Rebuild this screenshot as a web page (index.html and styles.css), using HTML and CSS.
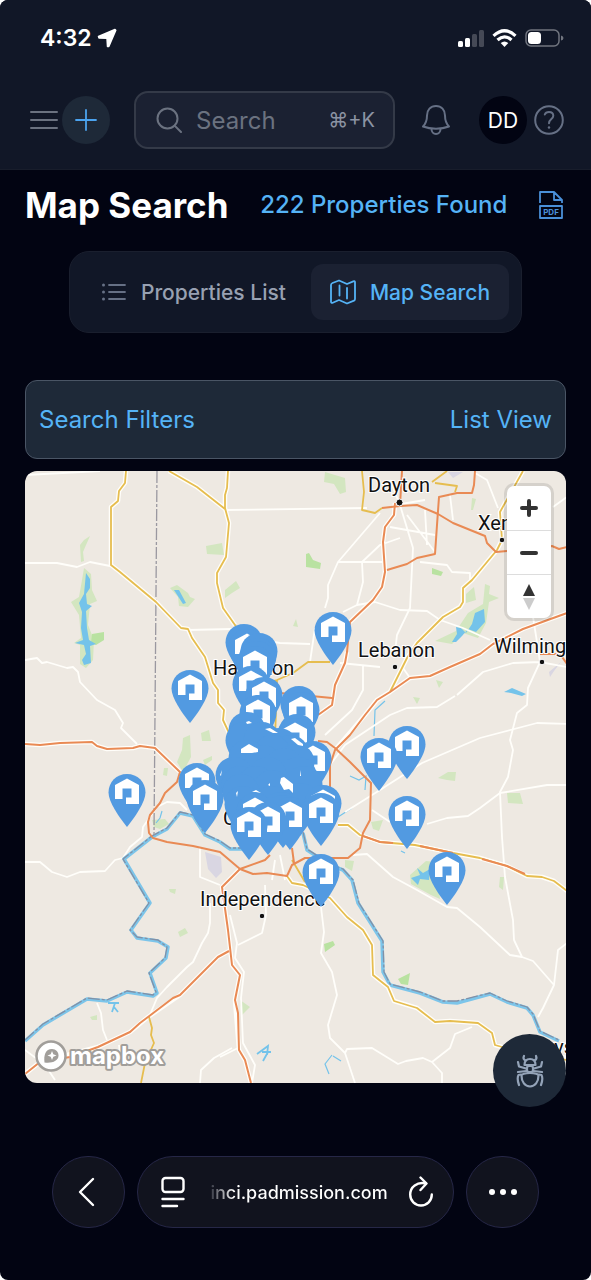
FILE: index.html
```html
<!DOCTYPE html>
<html lang="en">
<head>
    <meta charset="UTF-8">
    <meta name="viewport" content="width=device-width, initial-scale=1.0">
    <title>Map Search</title>
    <link rel="stylesheet" href="styles.css">
</head>
<body>

<div class="screen">
    <header class="top">
        <div class="status-bar">
            <span class="clock">4:32</span>
            <svg class="location-icon" width="20" height="20" viewBox="0 0 20 20"><path d="M18 1.500L1.500 8.500L2 10L10 10.300L10.500 18.500H11.800L18.800 2.200Z" fill="#fff" stroke="#fff" stroke-width="1.500" stroke-linejoin="round"/></svg>
            <svg class="status-icons" width="106" height="20" viewBox="0 0 106 20">
                <g fill="#fff">
                    <rect x="0" y="13" width="5" height="6" rx="1.500"/>
                    <rect x="7" y="10" width="5" height="9" rx="1.500"/>
                    <rect x="14" y="6" width="5" height="13" rx="1.500" opacity=".22"/>
                    <rect x="21" y="2" width="5" height="17" rx="1.500" opacity=".22"/>
                </g>
                <g fill="none" stroke="#fff" stroke-width="3.200">
                    <path d="M35.500 7.800 Q46.500 -2.400 57.500 7.800"/>
                    <path d="M39.500 12 Q46.500 5.600 53.500 12"/>
                </g>
                <path d="M42.700 15 Q46.500 11.800 50.300 15 L46.500 19Z" fill="#fff"/>
                <rect x="68" y="2" width="33" height="16" rx="5" fill="none" stroke="#71757f" stroke-width="1.500"/>
                <rect x="70" y="4" width="13" height="12" rx="3.500" fill="#fff"/>
                <path d="M103 7.500 Q105.500 8 105.500 10 Q105.500 12 103 12.500Z" fill="#71757f"/>
            </svg>
        </div>

        <nav class="toolbar">
            <button class="menu-btn" aria-label="Menu">
                <svg width="28" height="20" viewBox="0 0 28 20" fill="none" stroke="#6b7280" stroke-width="2" stroke-linecap="round"><path d="M1 2H27M1 10H27M1 18H27"/></svg>
            </button>
            <button class="add-btn" aria-label="Add">
                <svg width="22" height="22" viewBox="0 0 22 22" fill="none" stroke="#4ba3ef" stroke-width="1.800" stroke-linecap="round"><path d="M11 1V21M1 11H21"/></svg>
            </button>
            <label class="search-box">
                <svg width="26" height="26" viewBox="0 0 26 26" fill="none" stroke="#6b7280" stroke-width="2" stroke-linecap="round"><circle cx="11.500" cy="11.500" r="10"/><path d="M18.600 18.600L25 25"/></svg>
                <input type="search" placeholder="Search" aria-label="Search">
                <span class="shortcut">⌘+K</span>
            </label>
            <button class="bell-btn" aria-label="Notifications">
                <svg width="28" height="32" viewBox="0 0 28 32" fill="none" stroke="#667085" stroke-width="2" stroke-linejoin="round"><path d="M14 2C8.500 2 5 6 5 11.500C5 17.500 3.500 20 1 22.500C5 24 9 24.700 14 24.700C19 24.700 23 24 27 22.500C24.500 20 23 17.500 23 11.500C23 6 19.500 2 14 2Z"/><path d="M9.500 25C9.500 28 11.500 30 14 30C16.500 30 18.500 28 18.500 25"/></svg>
            </button>
            <button class="avatar">DD</button>
            <button class="help-btn" aria-label="Help">
                <svg width="30" height="30" viewBox="0 0 30 30" fill="none" stroke="#667085" stroke-width="2" stroke-linecap="round"><circle cx="15" cy="15" r="13.800"/><path d="M10.800 9.500C11.500 7.500 13 6.900 15 6.900C17.800 6.900 19.300 8.500 19.300 10.700C19.300 14 15 14 15 18.200"/><path d="M15 22.500V22.600" stroke-width="2.400"/></svg>
            </button>
        </nav>
    </header>

    <main>
        <div class="title-row">
            <h1>Map Search</h1>
            <span class="count">222 Properties Found</span>
            <button class="pdf-btn" aria-label="Export PDF">
                <svg width="24" height="28" viewBox="0 0 24 28" fill="none" stroke="#4a90d9" stroke-width="1.800" stroke-linejoin="round">
                    <path d="M1 12V1H15L23 9V12M15 1V9H23"/>
                    <rect x="1" y="15" width="22" height="12"/>
                    <text x="12" y="24" text-anchor="middle" class="pdf-text">PDF</text>
                </svg>
            </button>
        </div>

        <div class="tabs">
            <a class="tab" href="#list">
                <svg width="26" height="20" viewBox="0 0 26 20" fill="none" stroke="#667085" stroke-width="1.800" stroke-linecap="round"><path d="M8 3H24M8 10H24M8 17H24"/><path d="M2.500 3V3.010M2.500 10V10.010M2.500 17V17.010" stroke-width="3"/></svg>
                Properties List
            </a>
            <a class="tab active" href="#map">
                <svg width="26" height="26" viewBox="0 0 26 26" fill="none" stroke="#55b3f6" stroke-width="1.800" stroke-linecap="round" stroke-linejoin="round"><path d="M9 1.500L2.500 4Q1 4.600 1 6V22.500Q1 24.500 2.800 23.700L9 21L17 24.500L24 21.700Q25 21.200 25 20V3.500Q25 1.700 23.300 2.300L17 5Z"/><path d="M9.500 6.500V16.500M17 9V19.500"/></svg>
                Map Search
            </a>
        </div>

        <div class="filter-bar">
            <a href="#filters">Search Filters</a>
            <a href="#list">List View</a>
        </div>

        <div class="map-wrap">
            <svg class="map" viewBox="25 471 541 612" preserveAspectRatio="xMidYMid slice">
                <defs>
                    <path id="drop" d="M0 0C-10.500 0 -18.500 8 -18.500 18.500C-18.500 28 -8 43 0 53C8 43 18.500 28 18.500 18.500C18.500 8 10.500 0 0 0Z" fill="#529ae1"/>
                    <path id="house" d="M0 4.500L12 11V30H-1V23.500H4.500V14.500H-4.500V25H-12V11Z" fill="#fff"/>
                    <g id="pin"><use href="#drop"/><use href="#house"/></g>
                </defs>
                <rect x="25" y="471" width="542" height="612" fill="#eee9e2"/>

                <!-- parks -->
                <g fill="#d3e6c0">
                    <path d="M80 545L84 540L90 536L86 545L83 552L84 561L81 562Z"/>
                    <path d="M84 568L91 574L92 590L97 601L90 604L88 625L94 640L93 660L86 668L80 664L80 645L74 643L81 638L79 615L71 602L79 597L82 580Z"/>
                    <path d="M170 588L177 585L188 593L190 597L195 599L188 607L179 606L178 597Z"/>
                    <path d="M206 546L222 543L224 555L207 554Z"/>
                    <path d="M325 472L345 478L346 492L340 494L334 484L324 482Z"/>
                    <path d="M225 590L236 581L240 588L232 593L225 598Z"/>
                    <path d="M183 738L190 735L191 757L183 772L177 762L182 750ZM201 733L209 730L211 741L202 741Z"/>
                    <path d="M203 760L212 756L212 760L205 765ZM164 768L168 768L167 776L163 775Z"/>
                    <path d="M152 820L165 819L169 824L160 829L154 827Z"/>
                    <path d="M466 594L474 587L476 600L466 603ZM485 584L490 586L489 594L499 598L489 602L486 623L478 638L463 633L452 644L435 641L456 631L468 613L483 604Z"/>
                    <path d="M438 778L448 772L456 772L455 781L447 780ZM507 793L520 793L523 804L508 803Z"/>
                    <path d="M371 822L383 820L379 831L373 829ZM410 875L426 861L436 862L440 899L431 895L411 884Z"/>
                    <path d="M169 889L176 889L175 894L170 892ZM178 932L185 928L188 933L180 937ZM90 1017L97 1015L97 1020L92 1020Z"/>
                    <path d="M240 1000L250 1007L242 1015ZM472 498L476 499L473 510L471 510ZM345 860L354 861L352 871L345 867Z"/>
                    <path d="M413 697L420 698L417 704ZM436 680L443 682L439 688ZM293 626L296 619L298 627ZM500 877L504 877L503 890L499 887Z"/>
                </g>
                <g fill="#b9e2a1">
                    <path d="M92 634L104 632L104 640L96 645L91 643ZM306 554L309 553L313 560L321 563L320 569L306 567Z"/>
                    <path d="M324 944L333 941L335 945L325 952ZM398 979L410 973L408 985L401 984ZM432 568L443 572L441 576L432 574Z"/>
                </g>
                <g fill="#d9d6e2">
                    <path d="M205 852L221 857L222 872L216 878L208 869ZM448 472H463L453 478ZM549 672L561 662L554 671L550 677Z"/>
                </g>

                <!-- lakes -->
                <g fill="#74c3ea">
                    <path d="M86 573L90 579L90 588L86 594L87 604L92 606L86 611L87 628L89 640L96 644L90 646L91 663L84 665L82 660L86 654L84 645L75 643L83 640L81 628L82 612L79 603L84 594Z"/>
                    <path d="M174 590L179 590L186 603L183 604Z"/>
                    <path d="M484 609L485 622L476 632L468 629L462 636L456 642L452 642L457 634L456 627L461 628L466 633L472 624L475 613Z"/>
                    <path d="M504 692L512 688L526 694L522 696L511 693Z"/>
                    <path d="M411 878L420 875L417 868L423 873L430 869L429 880L420 879L418 885Z"/>
                </g>
                <g fill="none" stroke="#74c3ea" stroke-width="1.200">
                    <path d="M162 811L160 818L156 823M332 1055L325 1064L329 1074M333 1056L341 1061"/>
                    <path d="M385 701L375 710L374 736M350 776L359 780L366 776L365 790M338 817L352 808M401 851L405 853"/>
                    <path d="M108 1003L119 1003M115 1003L112 1012M114 1007L118 1012M257 1054L268 1046L267 1055M262 1052L271 1052M268 1052L263 1061" stroke-width="1.800"/>
                </g>

                <!-- minor roads -->
                <g fill="none" stroke="#fffefa" stroke-width="1.800" stroke-linejoin="round">
                    <path d="M25 475L100 471M225 510L367 508M25 563L57 563L77 567L90 562L110 566"/>
                    <path d="M25 660L37 658L42 663L47 662L67 668L73 667L78 672L80 682L97 700L115 710L123 723L121 728L137 744"/>
                    <path d="M188 630L232 629M262 640L280 643L310 644M315 628L310 662"/>
                    <path d="M25 862H40L52 872L67 877L80 872L105 871L115 860L123 858L130 847L142 837L143 827L157 807L167 802L180 803L187 810"/>
                    <path d="M149 1017L157 998L167 987L187 967L193 962L202 943L208 933L210 923V903M97 1003L101 1013L103 1030L107 1040M200 847V877L220 885"/>
                    <path d="M321 907L324 932L321 953L332 972L337 995L328 1025L330 1038L345 1053L355 1083M345 1053L347 1049L372 1048L398 1064L406 1061L423 1058L432 1062L450 1048L455 1034L472 1027M432 1062L442 1073V1083"/>
                    <path d="M265 885L266 915L262 933L238 945M230 915L237 943L235 958L244 972L241 998L243 1043L255 1065L252 1083M220 1057L240 1047M200 1083L201 1070L214 1058L232 1048"/>
                    <path d="M353 855L367 854L393 877L417 890L447 907L457 908L480 927L510 955L522 957L533 961L554 985L543 1008L538 1017M554 985L558 950L567 943"/>
                    <path d="M540 662L528 688L527 705L517 713L510 740L513 750L508 777L500 792L502 837L505 877L513 920L514 940L522 957"/>
                    <path d="M567 785H547L500 793L480 808L468 816L447 818L427 824M567 724L537 723L480 738L422 763L380 790L345 812M455 696L437 707L407 708L390 715L345 745L330 765M372 810L390 822"/>
                    <path d="M380 513L338 562L328 585V598L325 608M338 562H383M400 538L380 545L362 562L363 582L357 605L343 612M357 605L375 602L400 610L427 611L440 620L463 628L490 640"/>
                    <path d="M400 505L413 548L410 608L397 635L395 652M420 562L447 565L452 572L470 573V580M407 515L435 552M390 527L435 535M425 510L427 545M400 505L390 480M450 495L453 520M395 505L425 500"/>
                    <path d="M540 662L513 663L483 672L457 695M533 617L537 642L540 662M475 473L487 480L498 508M567 497L553 507M340 663L380 667M363 665V690L352 710L325 735M540 662L567 667M403 668L410 678"/>
                    <path d="M25 1050L45 1065L55 1080M119 1045L121 1060M280 855L285 880M275 860L272 880"/>
                </g>

                <!-- river -->
                <g fill="none" stroke-linejoin="round">
                    <g stroke="#7cc5ea" stroke-width="3.500">
                        <path d="M25 1041L43 1025L87 999L107 1001L127 992L153 996L157 993L150 973L166 958L168 947L158 941L137 938L131 930L150 903L124 859L152 837L167 829L180 813L193 816L205 835L220 842L230 849H245"/>
                        <path d="M303 833L307 850L330 865L343 870L352 880L358 903L382 941L383 972L390 985L420 993L443 1002L457 1003L490 994L507 1002L527 1008L533 1015L540 1032L559 1041"/>
                    </g>
                    <g stroke="#8290a6" stroke-width="1.300" stroke-dasharray="12 2 3 2">
                        <path d="M25 1040L43 1024L87 998L107 1000L127 991L153 995L156 992L149 973L165 958L167 947L158 940L137 937L130 930L149 903L123 859L152 836L167 828L180 812L193 815L205 834L220 841L230 848H245"/>
                        <path d="M303 832L307 849L330 864L343 869L353 880L359 903L383 941L384 972L390 984L420 992L443 1001L457 1001L490 993L507 1001L527 1007L533 1014L540 1031L559 1040"/>
                        <path d="M157 471L154 835" stroke="#9a98a0"/>
                    </g>
                </g>

                <!-- highways: white casing first, colour on top -->
                <g fill="none" stroke="#fffefa" stroke-width="4.500" stroke-linejoin="round">
                    <path d="M126 471L125 483L119 491L118 501L111 507V565L120 572L156 602L181 628L188 629L192 638L205 657L213 683L218 690V703L224 710L223 720L230 735"/>
                    <path d="M228 471L227 488L225 495V508L229 523L226 557L217 573V583L223 608L235 625M169 471L197 487L225 509"/>
                    <path d="M395 503L394 515L385 527L383 542L385 572L382 587L373 600L350 622M347 652L345 663L335 685L332 705L318 715"/>
                    <path d="M390 692L407 658L417 643L443 617L460 607L463 602V588L472 580L497 550L502 540L500 512L523 471"/>
                    <path d="M287 876L292 883L303 885L330 898L347 917L363 930L372 945L373 975L388 987L394 1001L417 1008L435 1022L450 1021L478 1023L492 1033L495 1045L502 1047L567 1058"/>
                    <path d="M25 744L40 745L60 743L92 742L97 746L107 749L133 748L140 746L155 748L180 772M567 613L523 629L493 644L480 654L450 667L430 676L410 678L390 692L377 700L365 715L335 750"/>
                    <path d="M240 869L222 887L228 930L232 965L240 975L235 1000L239 1050L245 1060L251 1083M229 951L218 957L180 995L148 1017L130 1032L98 1047L40 1062L25 1074"/>
                    <path d="M338 825H348L360 835L380 842L415 845L453 853L480 858L507 866L527 876L542 877L554 881L567 891"/>
                </g>
                <g fill="none" stroke="#e6bd4f" stroke-width="1.800" stroke-linejoin="round">
                    <path d="M126 471L125 483L119 491L118 501L111 507V565L120 572L156 602L181 628L188 629L192 638L205 657L213 683L218 690V703L224 710L223 720L230 735"/>
                    <path d="M169 471L197 487L225 509M228 471L227 488L225 495V508L229 523L226 557L217 573V583L223 608L235 625L245 640"/>
                    <path d="M362 471L364 492L362 510L375 513L382 508M447 471L432 482M435 483L457 486L455 492M265 683L277 680L293 673L308 662H330M277 680L275 740"/>
                    <path d="M390 692L407 658L417 643L443 617L460 607L463 602V588L472 580L497 550L502 540L500 512L523 471"/>
                    <path d="M287 876L292 883L303 885L330 898L347 917L363 930L372 945L373 975L388 987L394 1001L417 1008L435 1022L450 1021L478 1023L492 1033L495 1045L502 1047L567 1060"/>
                    <path d="M149 1017L152 1028L151 1035L154 1043L145 1063L141 1083M292 860L305 882"/>
                    <path d="M338 825H348L360 835L380 842L415 845L453 853L480 858L507 866L527 876L542 877L554 881L567 891"/>
                </g>
                <g fill="none" stroke="#e98a54" stroke-width="2" stroke-linejoin="round">
                    <path d="M25 744L40 745L60 743L92 742L97 746L107 749L133 748L140 746L155 748L180 772L177 782L165 793L160 803L150 815L148 822L149 833L153 838L167 842L193 846L220 852L240 869L253 874L267 873L287 876L292 865L305 858H348L360 848L363 833L370 820L371 783L350 762L335 748L327 742L318 741"/>
                    <path d="M270 855L265 860L240 869L222 887L228 930L232 965L240 975L235 1000L238 1013L239 1050L245 1060L251 1083M292 848L294 863"/>
                    <path d="M229 951L218 957L180 995L173 998L148 1017L140 1023L130 1032L98 1047L70 1057L40 1062L25 1074"/>
                    <path d="M567 613L523 629L493 644L480 654L450 667L430 676L410 678L390 692L377 700L365 715L350 735L335 750L330 765V790"/>
                    <path d="M382 508L400 506L417 505L438 514L453 523L485 536L487 543L496 552L507 551L552 546L559 549L567 547"/>
                    <path d="M387 570L407 564L417 558L435 554L437 525L439 497L457 493H472L474 485L475 471"/>
                    <path d="M395 503L394 515L385 527L383 542L385 572L382 587L373 600L350 622L347 652L345 663L335 685L332 705L318 715M280 693L332 698M402 471L400 505M540 654L560 654L567 664"/>
                    <path d="M363 836L380 842L393 843M420 846L453 853M482 859L507 866L525 874"/>
                </g>

                <!-- towns -->
                <g class="towns">
                    <text x="368" y="492">Dayton</text>
                    <text x="478" y="530">Xenia</text>
                    <text x="358" y="657">Lebanon</text>
                    <text x="494" y="653">Wilmington</text>
                    <text x="213" y="675">Hamilton</text>
                    <text x="223" y="825">Cincinnati</text>
                    <text x="200" y="906">Independence</text>
                    <text x="526" y="1054">Maysville</text>
                </g>
                <g fill="#111" stroke="#fff" stroke-width="1">
                    <circle cx="399.500" cy="502.500" r="3.500"/><circle cx="502" cy="540" r="2.800"/><circle cx="395" cy="667" r="2.800"/><circle cx="542" cy="662" r="2.800"/><circle cx="262" cy="916" r="2.800"/>
                </g>

                <!-- property pins, north to south -->
                <use href="#pin" x="333" y="612"/>
                <use href="#drop" x="244" y="624"/>
                <use href="#pin" x="247" y="629"/>
                <use href="#drop" x="259" y="633"/>
                <use href="#pin" x="258" y="638"/>
                <use href="#drop" x="257" y="641"/>
                <use href="#pin" x="255" y="646"/>
                <use href="#pin" x="251" y="666"/>
                <use href="#pin" x="190" y="670"/>
                <use href="#pin" x="264" y="677"/>
                <use href="#drop" x="299" y="686"/>
                <use href="#pin" x="301" y="692"/>
                <use href="#pin" x="258" y="695"/>
                <use href="#drop" x="247" y="712"/>
                <use href="#drop" x="297" y="714"/>
                <use href="#pin" x="295" y="718"/>
                <use href="#drop" x="244" y="722"/>
                <use href="#pin" x="407" y="726"/>
                <use href="#drop" x="262" y="722"/>
                <use href="#drop" x="279" y="728"/>
                <use href="#drop" x="290" y="735"/>
                <use href="#pin" x="379" y="738"/>
                <use href="#drop" x="272" y="735"/>
                <use href="#pin" x="313" y="741"/>
                <use href="#drop" x="296" y="744"/>
                <use href="#drop" x="247" y="740"/>
                <use href="#drop" x="263" y="745"/>
                <use href="#drop" x="284" y="748"/>
                <use href="#drop" x="298" y="757"/>
                <use href="#drop" x="234" y="757"/>
                <use href="#drop" x="268" y="757"/>
                <use href="#pin" x="197" y="763"/>
                <use href="#drop" x="240" y="766"/>
                <use href="#drop" x="256" y="766"/>
                <use href="#drop" x="272" y="770"/>
                <use href="#drop" x="304" y="766"/>
                <use href="#drop" x="241" y="774"/>
                <use href="#pin" x="127" y="774"/>
                <use href="#drop" x="300" y="783"/>
                <use href="#pin" x="205" y="780"/>
                <use href="#pin" x="323" y="785"/>
                <use href="#drop" x="243" y="786"/>
                <use href="#drop" x="272" y="786"/>

                <!-- roofs that still show between the stacked pins -->
                <g fill="#fff">
                    <path d="M249 744L258 749V752L252 753L241 753V749Z"/>
                    <path d="M246 722L249 721L252 723L247 724ZM265 729L270 728L278 733L273 733Z"/>
                    <path d="M291 739L295 738L303 744V746L298 745Z"/>
                    <path d="M281 778L284 777L293 784V793L289 789L284 790L280 783Z"/>
                    <path d="M220 775L222 770L221 776ZM252 792L256 790L261 793L256 792ZM236 793L238 791L237 797ZM301 770V776L300 776ZM268 785L270 783V786Z"/>
                </g>

                <use href="#pin" x="255" y="793"/>
                <use href="#pin" x="281" y="792"/>
                <use href="#drop" x="283" y="795"/>
                <use href="#pin" x="321" y="793"/>
                <use href="#pin" x="407" y="796"/>
                <use href="#pin" x="290" y="797"/>
                <use href="#pin" x="268" y="802"/>
                <use href="#pin" x="249" y="807"/>
                <use href="#pin" x="447" y="852"/>
                <use href="#pin" x="321" y="854"/>
            </svg>

            <div class="map-controls">
                <button aria-label="Zoom in"><svg width="20" height="20" viewBox="0 0 20 20" stroke="#333" stroke-width="4" stroke-linecap="round"><path d="M10 3V17M3 10H17"/></svg></button>
                <button aria-label="Zoom out"><svg width="20" height="20" viewBox="0 0 20 20" stroke="#333" stroke-width="4" stroke-linecap="round"><path d="M3 10H17"/></svg></button>
                <button aria-label="Reset north"><svg width="12" height="26" viewBox="0 0 12 26"><path d="M6 0L12 12H0Z" fill="#333"/><path d="M0 14H12L6 26Z" fill="#ccc"/></svg></button>
            </div>

            <a class="mapbox-logo" href="#mapbox" aria-label="Mapbox">
                <svg width="134" height="36" viewBox="0 0 134 36">
                    <circle cx="17" cy="17" r="14.500" fill="#fff" stroke="#a19e9a" stroke-width="2.500"/>
                    <path d="M10.500 23.500C9.500 16 11.500 10 18 10C22 10 24.500 13 24.500 16.500C24.500 22 18 24.500 10.500 23.500Z" fill="#a19e9a"/>
                    <path d="M18 12L19.300 15.200L22.500 16.500L19.300 17.800L18 21L16.700 17.800L13.500 16.500L16.700 15.200Z" fill="#fff"/>
                    <text x="36" y="25">mapbox</text>
                </svg>
            </a>

            <button class="bug-btn" aria-label="Report a bug">
                <svg width="28" height="34" viewBox="0 0 28 34" fill="none" stroke="#94a3b8" stroke-width="2.200" stroke-linecap="round" stroke-linejoin="round">
                    <path d="M8 2C7 4 7.500 5.500 9.500 6.500M20 2C21 4 20.500 5.500 18.500 6.500"/>
                    <path d="M8.500 11C8.500 7 10.500 5 14 5C17.500 5 19.500 7 19.500 11Z"/>
                    <rect x="11" y="12" width="6" height="6" rx="2"/>
                    <path d="M14 19C9 19 5.500 20 5.500 21.500C5.500 28 9 32.500 14 32.500C19 32.500 22.500 28 22.500 21.500C22.500 20 19 19 14 19Z"/>
                    <path d="M10 14.500L3 12.500L2 8M18 14.500L25 12.500L26 8M10.500 17L2 18M17.500 17L26 18M5 20.500L2.500 21C1 24 1.500 27 3 31M23 20.500L25.500 21C27 24 26.500 27 25 31"/>
                </svg>
            </button>
        </div>
    </main>

    <footer class="browser-bar">
        <button class="round-btn" aria-label="Back">
            <svg width="22" height="30" viewBox="0 0 22 30" fill="none" stroke="#fff" stroke-width="2.400" stroke-linecap="round" stroke-linejoin="round"><path d="M15 2L2 15L15 28"/></svg>
        </button>
        <div class="address">
            <svg width="24" height="32" viewBox="0 0 24 32" fill="none" stroke="#fff" stroke-width="2.400" stroke-linecap="round"><rect x="1.500" y="2" width="21" height="14" rx="3"/><path d="M1.500 23H22.500M1.500 30H16"/></svg>
            <span class="url">inci.padmission.com</span>
            <button class="reload-btn" aria-label="Reload">
                <svg width="24" height="32" viewBox="0 0 24 32" fill="none" stroke="#fff" stroke-width="2.400" stroke-linecap="round" stroke-linejoin="round"><path d="M17 7.500C8 5.500 1.200 11 1.200 18.500C1.200 25 6 29.500 12 29.500C18 29.500 22.800 25 22.800 18.500"/><path d="M11.500 1.500L17.500 7.500L11.500 14"/></svg>
            </button>
        </div>
        <button class="round-btn" aria-label="More">
            <svg width="30" height="8" viewBox="0 0 30 8" fill="#fff"><circle cx="4" cy="4" r="3"/><circle cx="15" cy="4" r="3"/><circle cx="26" cy="4" r="3"/></svg>
        </button>
    </footer>
</div>

</body>
</html>
```

FILE: styles.css
```css
* {
    box-sizing: border-box;
}
html {
    background-color: #fff;
}
body {
    margin: 0;
    font-family: Inter, "Liberation Sans", sans-serif;
    color: #fff;
}
button {
    padding: 0;
    border: none;
    background: none;
    font-family: inherit;
    color: inherit;
}
button, a {
    display: flex;
    align-items: center;
    justify-content: center;
    flex-shrink: 0;
    text-decoration: none;
}
svg {
    display: block;
    flex-shrink: 0;
}
.screen {
    min-height: 100vh;
    background-color: #020412;
    border-radius: 8px;
    overflow: hidden;
}

/* header */
.top {
    background-color: #111727;
    border-bottom: 1px solid #181d2b;
    padding-bottom: 20px;
}
.status-bar {
    display: flex;
    align-items: center;
    height: 76px;
    padding: 0 27px 0 40px;
}
.clock {
    font-size: 23px;
    font-weight: 600;
}
.location-icon {
    margin-left: 5px;
}
.status-icons {
    margin-left: auto;
}
.toolbar {
    display: flex;
    align-items: center;
    padding: 15px 27px 0 30px;
}
.add-btn {
    width: 48px;
    height: 48px;
    margin-left: 4px;
    border-radius: 50%;
    background-color: #1e2938;
}
.search-box {
    display: flex;
    align-items: center;
    flex: 1;
    min-width: 0;
    height: 58px;
    margin: 0 27px 0 24px;
    padding: 0 18px 0 20px;
    border: 2px solid #343a48;
    border-radius: 14px;
    background-color: #1b2132;
}
.search-box input {
    flex: 1;
    min-width: 0;
    padding: 0 0 0 14px;
    border: none;
    outline: none;
    background: none;
    font-family: inherit;
    font-size: 24px;
    color: #fff;
}
.search-box input::placeholder {
    color: #6b7280;
}
.shortcut {
    font-family: Inter, "DejaVu Sans", sans-serif;
    font-size: 20px;
    color: #8b93a3;
}
.avatar {
    width: 48px;
    height: 48px;
    margin: 0 7px 0 29px;
    border-radius: 50%;
    background-color: #020412;
    font-size: 21px;
}

/* page */
main {
    padding: 0 25px;
}
.title-row {
    display: flex;
    align-items: center;
    justify-content: space-between;
    height: 69px;
}
h1 {
    margin: 0;
    font-size: 35px;
    font-weight: 700;
}
.count {
    font-size: 24px;
    font-weight: 500;
    color: #55b3f6;
}
.pdf-btn {
    margin-right: 3px;
}
.pdf-text {
    font-size: 8px;
    font-weight: 700;
    fill: #4a90d9;
    stroke: none;
}
.tabs {
    display: flex;
    width: fit-content;
    margin: 12px auto 47px;
    padding: 12px;
    border: 1px solid #1a1f2e;
    border-radius: 20px;
    background-color: #111727;
}
.tab {
    gap: 14px;
    height: 56px;
    padding: 0 19px;
    border-radius: 12px;
    font-size: 21px;
    font-weight: 500;
    color: #98a1b2;
}
.tab + .tab {
    margin-left: 6px;
}
.tab.active {
    background-color: #1b2132;
    color: #55b3f6;
}
.filter-bar {
    display: flex;
    align-items: center;
    justify-content: space-between;
    height: 79px;
    margin-bottom: 12px;
    padding: 0 13px;
    border: 1px solid #4a5565;
    border-radius: 12px;
    background-color: #1e2938;
    font-size: 24px;
}
.filter-bar a {
    color: #55b3f6;
}

/* map */
.map-wrap {
    position: relative;
}
.map {
    width: 100%;
    height: 612px;
    border-radius: 12px;
}
.towns {
    font-family: Roboto, sans-serif;
    font-size: 20px;
    fill: #111;
    stroke: #fff;
    stroke-width: 2px;
    paint-order: stroke;
}
.map-controls {
    position: absolute;
    top: 15px;
    right: 15px;
    width: 44px;
    border-radius: 7px;
    background-color: #fff;
    box-shadow: 0 0 0 3px rgba(0, 0, 0, 0.1);
}
.map-controls button {
    width: 44px;
    height: 44px;
}
.map-controls button + button {
    border-top: 1px solid #ddd;
}
.mapbox-logo {
    position: absolute;
    left: 9px;
    bottom: 8px;
}
.mapbox-logo text {
    font-family: Inter, sans-serif;
    font-size: 24px;
    font-weight: 700;
    fill: #fff;
    stroke: #a19e9a;
    stroke-width: 4px;
    stroke-linejoin: round;
    paint-order: stroke;
}
.bug-btn {
    position: absolute;
    right: 0;
    bottom: -24px;
    width: 73px;
    height: 73px;
    border-radius: 50%;
    background-color: #1e2938;
}

/* browser controls */
.browser-bar {
    display: flex;
    gap: 12px;
    padding: 73px 52px 52px;
}
.round-btn, .address {
    height: 72px;
    border: 1px solid #262747;
    border-radius: 36px;
    background-color: #11131e;
}
.round-btn {
    width: 73px;
}
.address {
    display: flex;
    align-items: center;
    justify-content: space-between;
    flex: 1;
    padding: 0 20px 0 23px;
}
.url {
    margin-left: 4px;
    font-size: 18px;
    font-weight: 500;
    background: linear-gradient(to right, #333541, #fff 24px);
    background-clip: text;
    color: transparent;
}
```
